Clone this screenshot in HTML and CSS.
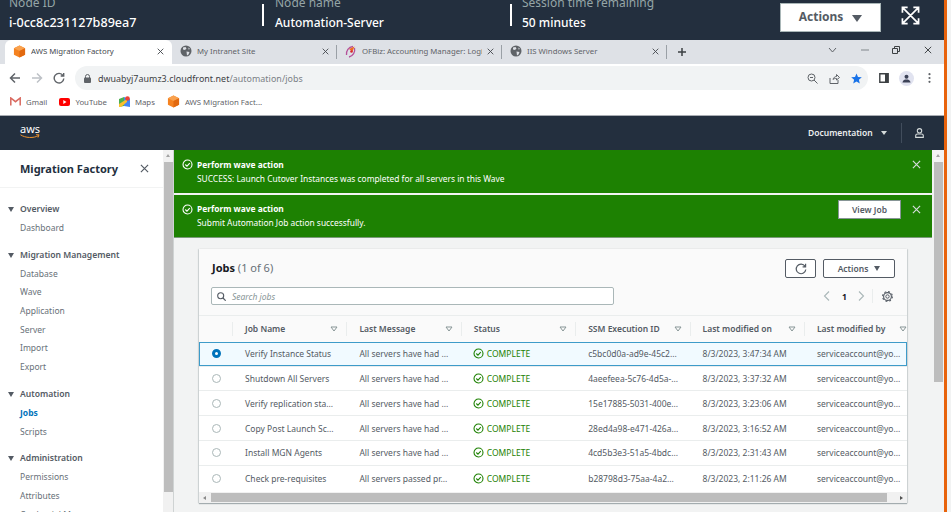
FILE: index.html
```html
<!DOCTYPE html>
<html lang="en">
<head>
<meta charset="utf-8">
<title>AWS Migration Factory</title>
<link rel="stylesheet" href="styles.css">
</head>
<body>
<svg class="defs" width="0" height="0">
  <defs>
    <symbol id="cube" viewBox="0 0 14 14">
      <path d="M7 .5 13 3.5V10.5L7 13.500 1 10.500V3.500Z" fill="#f58220"/>
      <path d="M7 .5 13 3.500 7 6.500 1 3.500Z" fill="#f9a24f"/>
      <path d="M7 6.500 13 3.500V10.500L7 13.500Z" fill="#e2690f"/>
    </symbol>
    <symbol id="globe" viewBox="0 0 12 12">
      <circle cx="6" cy="6" r="5.500" fill="#5f6368"/>
      <path d="M3 2.500 5.500 2 6.500 3.500 5 5 3 4.500ZM6.500 6.500 9.500 7 8.500 9.500 7 10.500ZM8.500 2.500 10 4 8.500 4.500Z" fill="#dee1e6"/>
    </symbol>
    <symbol id="x" viewBox="0 0 10 10">
      <path d="M1 1 9 9M9 1 1 9" fill="none" stroke="currentColor" stroke-width="1.300"/>
    </symbol>
    <symbol id="ok" viewBox="0 0 12 12">
      <circle cx="6" cy="6" r="4.900" fill="none" stroke="currentColor" stroke-width="1.200"/>
      <path d="M3.600 6 5.400 7.800 8.500 4.400" fill="none" stroke="currentColor" stroke-width="1.200"/>
    </symbol>
    <symbol id="sort" viewBox="0 0 8 6">
      <path d="M1 1H7L4 5Z" fill="none" stroke="#879596" stroke-width="1"/>
    </symbol>
  </defs>
</svg>

<div class="screen">
  <div class="frame">
    <header class="session">
      <div class="meta meta-id"><span class="meta-label">Node ID</span><span class="meta-value">i-0cc8c231127b89ea7</span></div>
      <div class="meta meta-node"><span class="meta-label">Node name</span><span class="meta-value">Automation-Server</span></div>
      <div class="meta meta-time"><span class="meta-label">Session time remaining</span><span class="meta-value">50 minutes</span></div>
      <button class="session-actions">Actions <span class="caret-big"></span></button>
      <svg class="expand" width="19" height="19" viewBox="0 0 20 20"><path d="M1.500 7V1.500H7M13 1.500H18.500V7M18.500 13V18.500H13M7 18.500H1.500V13M2 2 18 18M18 2 2 18" fill="none" stroke="#fff" stroke-width="1.800"/></svg>
    </header>

    <div class="tabstrip">
      <div class="tab tab-active"><svg class="fav" width="13" height="13"><use href="#cube"/></svg><span class="tab-title">AWS Migration Factory</span><svg class="tab-x" width="7" height="7"><use href="#x"/></svg></div>
      <div class="tab"><svg class="fav" width="12" height="12"><use href="#globe"/></svg><span class="tab-title">My Intranet Site</span><svg class="tab-x" width="7" height="7"><use href="#x"/></svg></div>
      <div class="tab tab-sep"><svg class="fav" width="12" height="13" viewBox="0 0 12 13"><path d="M8 1.500C3.500 2 1 6 1.500 10M9.500 3C10.500 7 8 11 4 12" fill="none" stroke="#b5519a" stroke-width="1.300"/><path d="M4 4 9.500 1.500 7.500 6.500Z" fill="#ef6c22"/><circle cx="6.500" cy="6.500" r="1.300" fill="#d9262b"/></svg><span class="tab-title">OFBiz: Accounting Manager: Logi</span><svg class="tab-x" width="7" height="7"><use href="#x"/></svg></div>
      <div class="tab tab-sep tab-last"><svg class="fav" width="12" height="12"><use href="#globe"/></svg><span class="tab-title">IIS Windows Server</span><svg class="tab-x" width="7" height="7"><use href="#x"/></svg></div>
      <svg class="newtab" width="10" height="10" viewBox="0 0 10 10"><path d="M5 1V9M1 5H9" stroke="#3c4043" stroke-width="1.500"/></svg>
      <div class="winctl">
        <svg width="9" height="6" viewBox="0 0 9 6"><path d="M1 1 4.500 5 8 1" fill="none" stroke="#5f6368"/></svg>
        <svg width="8" height="2" viewBox="0 0 8 2"><path d="M0 1H8" stroke="#80868b"/></svg>
        <svg width="8" height="8" viewBox="0 0 8 8"><path d="M.5 2.500H5.500V7.500H.5ZM2.500 2.500V.5H7.500V5.500H5.500" fill="none" stroke="#3c4043"/></svg>
        <svg width="8" height="8" viewBox="0 0 10 10"><path d="M1 1 9 9M9 1 1 9" fill="none" stroke="#3c4043" stroke-width="1.200"/></svg>
      </div>
    </div>

    <div class="toolbar">
      <svg class="nav" width="12" height="12" viewBox="0 0 12 12"><path d="M11 6H2M6 1.500 1.500 6 6 10.500" fill="none" stroke="#5f6368" stroke-width="1.500"/></svg>
      <svg class="nav" width="12" height="12" viewBox="0 0 12 12"><path d="M1 6H10M6 1.500 10.500 6 6 10.500" fill="none" stroke="#bdc1c6" stroke-width="1.500"/></svg>
      <svg class="nav" width="12" height="12" viewBox="0 0 12 12"><path d="M10 3.500A4.800 4.800 0 1 0 10.800 6.500M10.700 1V4H7.700" fill="none" stroke="#5f6368" stroke-width="1.400"/></svg>
      <div class="omnibox">
        <svg class="lock" width="7" height="9" viewBox="0 0 7 9"><path d="M1.500 4V2.500A2 2 0 0 1 5.500 2.500V4" fill="none" stroke="#5f6368"/><rect y="3.500" width="7" height="5.500" rx="1" fill="#5f6368"/></svg>
        <span class="url"><b>dwuabyj7aumz3.cloudfront.net</b>/automation/jobs</span>
        <div class="omni-icons">
          <svg width="11" height="11" viewBox="0 0 11 11"><circle cx="4.500" cy="4.500" r="3.500" fill="none" stroke="#5f6368"/><path d="M7 7 10.500 10.500M3 4.500H6" stroke="#5f6368"/></svg>
          <svg width="11" height="11" viewBox="0 0 11 11"><path d="M1 5V10.500H9V7M4 6.500C4.500 4.500 6 3.500 7.500 3.500V1.500L10.500 4.500 7.500 7V5.500C6 5.500 5 5.500 4 6.500Z" fill="none" stroke="#5f6368"/></svg>
          <svg width="11" height="11" viewBox="0 0 11 11"><path d="M5.500.5 7 4 10.800 4.300 7.900 6.800 8.800 10.500 5.500 8.500 2.200 10.500 3.100 6.800.2 4.300 4 4Z" fill="#1a73e8"/></svg>
        </div>
      </div>
      <svg class="panel" width="10" height="10" viewBox="0 0 10 10"><path d="M.8.8H9.200V9.200H.8Z" fill="none" stroke="#3c4043" stroke-width="1.400"/><rect x="6" y="1" width="3" height="8" fill="#3c4043"/></svg>
      <span class="avatar"><svg width="10" height="10" viewBox="0 0 10 10"><circle cx="5" cy="3" r="2.200" fill="#3c4257"/><path d="M.5 9.500C1 6.500 3 6 5 6S9 6.500 9.500 9.500Z" fill="#3c4257"/></svg></span>
      <svg class="dots" width="3" height="10" viewBox="0 0 3 10"><circle cx="1.500" cy="1.200" r="1.100" fill="#5f6368"/><circle cx="1.500" cy="5" r="1.100" fill="#5f6368"/><circle cx="1.500" cy="8.800" r="1.100" fill="#5f6368"/></svg>
    </div>

    <div class="bookmarks">
      <span class="bm"><svg width="11" height="9" viewBox="0 0 11 9"><path d="M.8 8.500V1L5.500 4.700 10.200 1V8.500" fill="none" stroke="#d9695f" stroke-width="1.500"/></svg>Gmail</span>
      <span class="bm"><svg width="11" height="8" viewBox="0 0 11 8"><rect width="11" height="8" rx="2" fill="#f00"/><path d="M4.300 2 7.500 4 4.300 6Z" fill="#fff"/></svg>YouTube</span>
      <span class="bm"><svg width="11" height="11" viewBox="0 0 11 11"><path d="M0 3 5 1V10L0 11Z" fill="#4caf50"/><path d="M5 1 11 3V11L5 10Z" fill="#4285f4"/><path d="M0 8 8 3V6L2 11H0Z" fill="#fbc02d"/><circle cx="8.500" cy="2.500" r="2.300" fill="#ea4335"/></svg>Maps</span>
      <span class="bm"><svg width="13" height="13"><use href="#cube"/></svg>AWS Migration Fact...</span>
    </div>

    <div class="awsbar">
      <div class="awslogo"><span>aws</span><svg width="20" height="5" viewBox="0 0 20 5"><path d="M.5 .8C5 4 14 4.500 18.500 1.500M16 .7 19 .8 18 3.500" fill="none" stroke="#ec912d" stroke-width="1"/></svg></div>
      <span class="doc">Documentation</span><span class="caret-sm"></span>
      <span class="awsbar-sep"></span>
      <svg class="user" width="9" height="10" viewBox="0 0 9 10"><circle cx="4.500" cy="2.800" r="2.200" fill="none" stroke="#d5dbdb" stroke-width="1.100"/><path d="M.7 9.400V7.600C.7 6.600 1.500 6 2.500 6H6.500C7.500 6 8.300 6.600 8.300 7.600V9.400Z" fill="none" stroke="#d5dbdb" stroke-width="1.100"/></svg>
    </div>

    <div class="app">
      <nav class="side">
        <div class="side-head"><span class="side-title">Migration Factory</span><svg class="side-x" width="9" height="9"><use href="#x"/></svg></div>
        <div class="side-body">
          <h3 class="sec"><span class="caret-nav"></span>Overview</h3>
          <a class="item">Dashboard</a>
          <h3 class="sec"><span class="caret-nav"></span>Migration Management</h3>
          <a class="item">Database</a><a class="item">Wave</a><a class="item">Application</a><a class="item">Server</a><a class="item">Import</a><a class="item">Export</a>
          <h3 class="sec"><span class="caret-nav"></span>Automation</h3>
          <a class="item item-on">Jobs</a><a class="item">Scripts</a>
          <h3 class="sec"><span class="caret-nav"></span>Administration</h3>
          <a class="item">Permissions</a><a class="item">Attributes</a><a class="item">Credential Ma</a>
        </div>
      </nav>
      <div class="vbar vbar-side"><span class="sb-up"></span><span class="sb-thumb sb-thumb-side"></span></div>

      <main class="content">
        <div class="flash">
          <svg class="flash-ok" width="11" height="11"><use href="#ok"/></svg>
          <div class="flash-text"><strong>Perform wave action</strong><span>SUCCESS: Launch Cutover Instances was completed for all servers in this Wave</span></div>
          <svg class="flash-x" width="9" height="9"><use href="#x"/></svg>
        </div>
        <div class="flash flash-two">
          <svg class="flash-ok" width="11" height="11"><use href="#ok"/></svg>
          <div class="flash-text"><strong>Perform wave action</strong><span>Submit Automation Job action successfully.</span></div>
          <button class="viewjob">View Job</button>
          <svg class="flash-x" width="9" height="9"><use href="#x"/></svg>
        </div>

        <section class="card">
          <div class="card-head">
            <div class="card-top">
              <h2 class="card-title">Jobs <span>(1 of 6)</span></h2>
              <button class="btn btn-icon"><svg width="12" height="12" viewBox="0 0 12 12"><path d="M10 3.200A4.800 4.800 0 1 0 10.800 6.500M10.600.8V3.800H7.600" fill="none" stroke="#545b64" stroke-width="1.200"/></svg></button>
              <button class="btn btn-actions">Actions <span class="caret-btn"></span></button>
            </div>
            <div class="card-tools">
              <div class="search"><svg width="9" height="9" viewBox="0 0 9 9"><circle cx="3.700" cy="3.700" r="3" fill="none" stroke="#545b64" stroke-width="1.100"/><path d="M6 6 8.700 8.700" stroke="#545b64" stroke-width="1.200"/></svg><span>Search jobs</span></div>
              <div class="pager">
                <svg width="7" height="10" viewBox="0 0 7 10"><path d="M6 .5 1.500 5 6 9.500" fill="none" stroke="#aab7b8" stroke-width="1.100"/></svg>
                <b>1</b>
                <svg width="7" height="10" viewBox="0 0 7 10"><path d="M1 .5 5.500 5 1 9.500" fill="none" stroke="#aab7b8" stroke-width="1.100"/></svg>
                <span class="pager-sep"></span>
                <svg width="11" height="11" viewBox="0 0 11 11"><circle cx="5.500" cy="5.500" r="1.700" fill="none" stroke="#545b64"/><circle cx="5.500" cy="5.500" r="3.900" fill="none" stroke="#545b64" stroke-width="1.100"/><circle cx="5.500" cy="5.500" r="4.900" fill="none" stroke="#545b64" stroke-width="1.100" stroke-dasharray="1.900 1.950"/></svg>
              </div>
            </div>
          </div>

          <div class="table">
            <div class="row row-head">
              <div class="cell cell-radio"></div>
              <div class="cell"><span>Job Name</span><svg width="8" height="6"><use href="#sort"/></svg></div>
              <div class="cell"><span>Last Message</span><svg width="8" height="6"><use href="#sort"/></svg></div>
              <div class="cell"><span>Status</span><svg width="8" height="6"><use href="#sort"/></svg></div>
              <div class="cell"><span>SSM Execution ID</span><svg width="8" height="6"><use href="#sort"/></svg></div>
              <div class="cell"><span>Last modified on</span><svg width="8" height="6"><use href="#sort"/></svg></div>
              <div class="cell"><span>Last modified by</span><svg width="8" height="6"><use href="#sort"/></svg></div>
            </div>
            <div class="row row-on">
              <div class="cell-radio"><i class="radio radio-on"></i></div><div class="cell">Verify Instance Status</div><div class="cell">All servers have had ...</div><div class="cell status"><svg width="11" height="11"><use href="#ok"/></svg>COMPLETE</div><div class="cell">c5bc0d0a-ad9e-45c2...</div><div class="cell">8/3/2023, 3:47:34 AM</div><div class="cell">serviceaccount@yo...</div>
            </div>
            <div class="row">
              <div class="cell-radio"><i class="radio"></i></div><div class="cell">Shutdown All Servers</div><div class="cell">All servers have had ...</div><div class="cell status"><svg width="11" height="11"><use href="#ok"/></svg>COMPLETE</div><div class="cell">4aeefeea-5c76-4d5a-...</div><div class="cell">8/3/2023, 3:37:32 AM</div><div class="cell">serviceaccount@yo...</div>
            </div>
            <div class="row">
              <div class="cell-radio"><i class="radio"></i></div><div class="cell">Verify replication sta...</div><div class="cell">All servers have had ...</div><div class="cell status"><svg width="11" height="11"><use href="#ok"/></svg>COMPLETE</div><div class="cell">15e17885-5031-400e...</div><div class="cell">8/3/2023, 3:23:06 AM</div><div class="cell">serviceaccount@yo...</div>
            </div>
            <div class="row">
              <div class="cell-radio"><i class="radio"></i></div><div class="cell">Copy Post Launch Sc...</div><div class="cell">All servers have had ...</div><div class="cell status"><svg width="11" height="11"><use href="#ok"/></svg>COMPLETE</div><div class="cell">28ed4a98-e471-426a...</div><div class="cell">8/3/2023, 3:16:52 AM</div><div class="cell">serviceaccount@yo...</div>
            </div>
            <div class="row">
              <div class="cell-radio"><i class="radio"></i></div><div class="cell">Install MGN Agents</div><div class="cell">All servers have had ...</div><div class="cell status"><svg width="11" height="11"><use href="#ok"/></svg>COMPLETE</div><div class="cell">4cd5b3e3-51a5-4bdc...</div><div class="cell">8/3/2023, 2:31:43 AM</div><div class="cell">serviceaccount@yo...</div>
            </div>
            <div class="row row-last">
              <div class="cell-radio"><i class="radio"></i></div><div class="cell">Check pre-requisites</div><div class="cell">All servers passed pr...</div><div class="cell status"><svg width="11" height="11"><use href="#ok"/></svg>COMPLETE</div><div class="cell">b28798d3-75aa-4a2...</div><div class="cell">8/3/2023, 2:11:26 AM</div><div class="cell">serviceaccount@yo...</div>
            </div>
          </div>
          <div class="hbar"><span class="hb-left"></span><span class="hb-thumb"></span><span class="hb-right"></span></div>
        </section>
      </main>
      <div class="vbar vbar-page"><span class="sb-up"></span><span class="sb-thumb sb-thumb-page"></span></div>
    </div>
  </div>
  <div class="edge"></div>
</div>
</body>
</html>
```

FILE: styles.css
```css
* { box-sizing: border-box; }
html, body { margin: 0; height: 512px; overflow: hidden; }
body { font-family: "Noto Sans", "Open Sans", sans-serif; color: #16191f; background: #f2f3f3; }
button { font-family: inherit; cursor: pointer; }
h2, h3 { margin: 0; }
.defs { display: block; height: 0; }

.screen { display: flex; width: 951px; height: 512px; }
.frame { width: 944px; height: 512px; display: flex; flex-direction: column; overflow: hidden; flex: none; }
.edge { width: 3px; height: 512px; background: #e8630c; flex: none; }

/* Session bar */
.session { height: 40px; flex: none; background: #232f3e; display: flex; align-items: flex-end; overflow: hidden; }
.meta { display: flex; flex-direction: column; height: 52px; flex: none; padding-bottom: 7px; justify-content: flex-end; }
.meta-label { color: #95a5a6; font-size: 12px; line-height: 20px; white-space: nowrap; }
.meta-value { color: #fff; font-size: 12px; font-weight: 500; line-height: 20px; white-space: nowrap; }
.meta-id { width: 262px; padding-left: 9px; }
.meta-id .meta-value { font-size: 12.600px; }
.meta-node { width: 248px; padding-left: 13px; }
.meta-time { width: 270px; padding-left: 12px; }
.meta-node, .meta-time { background: linear-gradient(#fff, #fff) 0 16px / 2px 22px no-repeat; }
.session-actions { width: 101px; height: 29px; margin-bottom: 8px; background: #fff; border: 1px solid #aab7b8; color: #545b64; font-size: 12px; font-weight: 700; display: flex; align-items: center; justify-content: center; gap: 9px; padding: 0 0 2px; flex: none; }
.caret-big { width: 0; height: 0; border-left: 5px solid transparent; border-right: 5px solid transparent; border-top: 7px solid #545b64; margin-top: 3px; }
.expand { margin: 0 0 15px 20px; flex: none; }

/* Chrome */
.tabstrip { height: 24px; flex: none; background: #dee1e6; display: flex; align-items: stretch; padding-left: 5px; }
.tab { width: 165px; flex: none; display: flex; align-items: center; padding: 0 8px 2px 8px; font-size: 7.800px; color: #5f6368; }
.tab-active { width: 167px; background: #fff; color: #45494e; border-radius: 6px 6px 0 0; }
.tab-sep { position: relative; }
.tab-sep::before { content: ""; position: absolute; left: -1px; top: 5px; height: 14px; width: 1px; background: #9aa0a6; }
.tab-last::after { content: ""; position: absolute; right: 0; top: 5px; height: 14px; width: 1px; background: #9aa0a6; }
.fav { flex: none; margin-right: 5px; }
.tab-title { flex: 1; min-width: 0; overflow: hidden; white-space: nowrap; }
.tab-x { color: #45494e; flex: none; margin-left: 5px; }
.newtab { margin: 7px 0 0 10px; flex: none; }
.winctl { margin-left: auto; width: 116px; display: flex; align-items: center; justify-content: space-between; padding: 0 12px 5px 0; }
.toolbar { height: 26px; flex: none; background: #fff; display: flex; align-items: center; padding: 2px 0 0 9px; }
.nav { margin-right: 10px; flex: none; }
.omnibox { width: 793px; height: 24px; flex: none; background: #f1f3f4; border-radius: 12px; display: flex; align-items: center; padding-left: 9px; }
.lock { flex: none; }
.url { margin-left: 7px; font-size: 8.900px; color: #7a7f85; letter-spacing: .05px; white-space: nowrap; }
.url b { font-weight: 400; color: #3c4043; }
.omni-icons { margin-left: auto; display: flex; gap: 11px; padding-right: 6px; }
.panel { margin-left: 11px; flex: none; }
.avatar { width: 15px; height: 15px; margin-left: 10px; border-radius: 50%; background: #e1e3f0; display: flex; align-items: center; justify-content: center; flex: none; }
.avatar svg { width: 9px; height: 9px; }
.dots { margin-left: 14px; flex: none; }
.bookmarks { height: 26px; flex: none; background: #fff; border-bottom: 1px solid #a9adb3; display: flex; align-items: center; padding: 0 0 2px 10px; gap: 12px; font-size: 7.800px; color: #5f6368; }
.bm { display: flex; align-items: center; gap: 5px; white-space: nowrap; }

/* AWS bar */
.awsbar { height: 34px; flex: none; background: #232f3e; display: flex; align-items: center; }
.awslogo { margin-left: 20px; width: 20px; display: flex; flex-direction: column; align-items: center; margin-bottom: 2px; }
.awslogo span { color: #fff; font-size: 11px; line-height: 8px; height: 8px; letter-spacing: -.1px; }
.awslogo svg { display: block; margin-top: 1px; }
.doc { margin: 0 0 2px 768px; color: #eaeded; font-size: 8.500px; font-weight: 600; white-space: nowrap; }
.caret-sm { margin-left: 8px; width: 0; height: 0; border-left: 3px solid transparent; border-right: 3px solid transparent; border-top: 4px solid #d5dbdb; }
.awsbar-sep { margin-left: 14px; width: 1px; height: 20px; background: #414d5c; }
.user { margin-left: 13px; flex: none; }

/* App */
.app { flex: 1; min-height: 0; display: flex; background: #f2f3f3; }
.side { width: 163px; flex: none; background: #fff; overflow: hidden; }
.side-head { height: 38px; border-bottom: 1px solid #f2f3f3; display: flex; align-items: center; padding: 0 0 0 20px; }
.side-title { font-size: 11px; font-weight: 700; color: #232f3e; white-space: nowrap; }
.side-x { margin-left: auto; margin-right: 14px; color: #545b64; flex: none; }
.side-body { padding-top: 11px; }
.sec { font-size: 8.600px; font-weight: 600; color: #545b64; line-height: 21px; height: 20px; padding-left: 20px; position: relative; margin-top: 7px; white-space: nowrap; }
.sec:first-child { margin-top: 0; }
.caret-nav { position: absolute; left: 8px; top: 8px; width: 0; height: 0; border-left: 3.500px solid transparent; border-right: 3.500px solid transparent; border-top: 5px solid #545b64; }
.item { display: block; font-size: 8.500px; color: #687078; line-height: 18.700px; height: 18.700px; padding-left: 20px; white-space: nowrap; }
.item-on { color: #0073bb; font-weight: 700; }

.vbar { width: 11px; flex: none; background: #f1f1f1; display: flex; flex-direction: column; align-items: center; padding-top: 4px; }
.sb-up { width: 0; height: 0; border-left: 2.500px solid transparent; border-right: 2.500px solid transparent; border-bottom: 3px solid #a3a3a3; }
.sb-thumb { width: 9px; background: #bdbdbd; margin-top: 5px; }
.sb-thumb-side { height: 330px; }
.sb-thumb-page { height: 220px; }
.vbar-side { border-right: 1px solid #cfd3d3; }
.vbar-page { width: 12px; background: #f2f3f3; }

.content { flex: 1; min-width: 0; }
.flash { height: 43px; background: #1d8102; display: flex; align-items: center; color: #fff; padding: 0 11px 0 8px; }
.flash-two { margin-top: 2px; border-bottom: 1px solid #7a9a7a; }
.flash-ok { flex: none; margin-right: 4px; margin-bottom: 14px; }
.flash-text { display: flex; flex-direction: column; font-size: 8.400px; line-height: 14px; white-space: nowrap; flex: 1; }
.flash-text strong { font-weight: 700; }
.flash-x { flex: none; color: #d5dbdb; margin-bottom: 14px; }
.viewjob { width: 63px; height: 19px; align-self: flex-start; margin: 5px 11px 0 0; background: #fff; border: 1px solid #879596; color: #545b64; font-size: 8.500px; font-weight: 600; padding: 0; }

.card { margin: 11px 0 0 25px; width: 708px; height: 254px; background: #fafafa; box-shadow: 0 1px 1px rgba(0, 28, 36, .3), 1px 0 1px rgba(0, 28, 36, .1), -1px 0 1px rgba(0, 28, 36, .1); display: flex; flex-direction: column; overflow: hidden; }
.card-head { height: 67px; flex: none; padding: 10px 12px 0 12px; border-bottom: 1px solid #eaeded; }
.card-top { display: flex; align-items: center; height: 19px; }
.card-title { font-size: 11px; font-weight: 700; color: #16191f; margin: 0 auto 2px 1px; white-space: nowrap; }
.card-title span { font-weight: 400; color: #687078; }
.btn { height: 19px; background: #fff; border: 1px solid #545b64; border-radius: 2px; color: #545b64; font-size: 8.500px; font-weight: 600; display: flex; align-items: center; justify-content: center; padding: 0; }
.btn-icon { width: 31px; margin-right: 7px; }
.btn-actions { width: 72px; gap: 6px; }
.caret-btn { width: 0; height: 0; border-left: 3.500px solid transparent; border-right: 3.500px solid transparent; border-top: 5px solid #545b64; }
.card-tools { display: flex; align-items: center; margin-top: 9px; height: 18px; }
.search { width: 403px; height: 18px; background: #fff; border: 1px solid #aab7b8; border-radius: 2px; display: flex; align-items: center; padding-left: 5px; gap: 6px; font-size: 8.500px; font-style: italic; color: #879596; }
.search svg { flex: none; }
.pager { margin-left: auto; display: flex; align-items: center; width: 72px; font-size: 8.500px; color: #16191f; }
.pager b { margin: 0 11px 0 12px; }
.pager-sep { width: 1px; height: 14px; background: #eaeded; margin: 0 9px 0 7px; }

.table { flex: 1; min-height: 0; background: #fff; }
.row { display: grid; grid-template-columns: 33px repeat(6, 114.400px); height: 24.850px; border-bottom: 1px solid #eaeded; align-items: center; font-size: 8.500px; color: #545b64; overflow: hidden; white-space: nowrap; }
.row-last { border-bottom: 0; }
.row-head { height: 25.700px; background: #fafafa; font-weight: 600; color: #545b64; border-bottom: 0; }
.row-head .cell { border-left: 1px solid #eaeded; height: 14px; display: flex; align-items: center; justify-content: space-between; padding: 0 8px 0 12px; }
.row-head .cell-radio { border: 0; padding: 0; }
.row-head .cell:last-child { padding-right: 11px; }
.row-head svg { flex: none; }
.cell { padding-left: 13px; min-width: 0; }
.row-on { background: #f1faff; box-shadow: inset 0 0 0 1px #3d9bc9; }
.cell-radio { display: flex; justify-content: center; padding-left: 1px; }
.radio { display: block; width: 9px; height: 9px; border-radius: 50%; background: #fff; border: 1px solid #aab7b8; }
.radio-on { border: 3px solid #0073bb; }
.status { display: flex; align-items: center; gap: 3px; color: #1d8102; }
.status svg { flex: none; margin-left: -1px; }

.hbar { height: 11px; flex: none; background: #f1f1f1; display: flex; align-items: center; }
.hb-left { width: 0; height: 0; border-top: 2.500px solid transparent; border-bottom: 2.500px solid transparent; border-right: 3px solid #8a8a8a; margin-left: 4px; }
.hb-thumb { width: 676px; height: 9px; background: #bdbdbd; margin-left: 5px; }
.hb-right { width: 0; height: 0; border-top: 2.500px solid transparent; border-bottom: 2.500px solid transparent; border-left: 3px solid #505050; margin-left: 13px; }
```
